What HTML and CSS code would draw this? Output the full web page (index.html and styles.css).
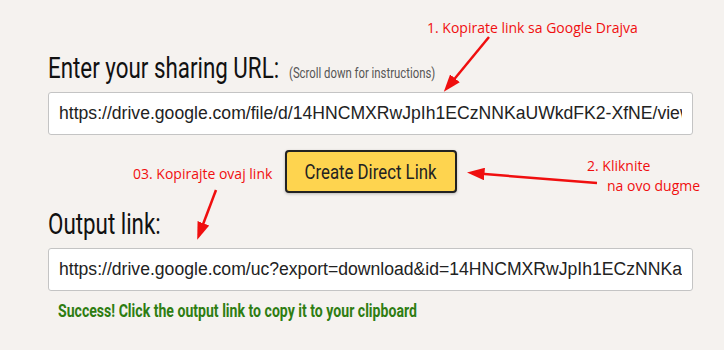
FILE: index.html
```html
<!DOCTYPE html>
<html lang="en">
<head>
    <meta charset="UTF-8">
    <meta name="viewport" content="width=device-width, initial-scale=1.0">
    <title>Google Drive Direct Link Generator</title>
    <link rel="stylesheet" href="styles.css">
</head>
<body>
    <div class="page">
        <div class="container">
            <h2 class="label"><span class="condensed">Enter your sharing URL:</span><small class="condensed">(Scroll down for instructions)</small></h2>
            <input type="text" class="url-field" value="https://drive.google.com/file/d/14HNCMXRwJpIh1ECzNNKaUWkdFK2-XfNE/view?usp=sharing">

            <div class="button-row">
                <button class="create-btn"><span class="condensed">Create Direct Link</span></button>
            </div>

            <h2 class="label output-label"><span class="condensed">Output link:</span></h2>
            <input type="text" class="url-field" value="https://drive.google.com/uc?export=download&amp;id=14HNCMXRwJpIh1ECzNNKaUWkdFK2-XfNE">

            <p class="success"><span class="condensed">Success! Click the output link to copy it to your clipboard</span></p>
        </div>

        <!-- crvene napomene preko stranice -->
        <div class="note note-1">1. Kopirate link sa Google Drajva</div>
        <div class="note note-2">2. Kliknite<br><span class="indent">na ovo dugme</span></div>
        <div class="note note-3">03. Kopirajte ovaj link</div>

        <svg class="arrows" width="724" height="350" viewBox="0 0 724 350">
            <defs>
                <marker id="head" markerWidth="7" markerHeight="5" refX="5" refY="2.5" orient="auto" markerUnits="strokeWidth">
                    <path d="M0,0 L7,2.5 L0,5 z" fill="#f00f0f"/>
                </marker>
            </defs>
            <line x1="489" y1="37" x2="447" y2="88" stroke="#f00f0f" stroke-width="2.5" marker-end="url(#head)"/>
            <line x1="597" y1="183" x2="472" y2="173" stroke="#f00f0f" stroke-width="2.5" marker-end="url(#head)"/>
            <line x1="216" y1="190" x2="199" y2="235" stroke="#f00f0f" stroke-width="2.5" marker-end="url(#head)"/>
        </svg>
    </div>
</body>
</html>
```

FILE: styles.css
```css
body {
    margin: 0;
    background-color: #f5f2ef;
    font-family: Roboto, "Liberation Sans", sans-serif;
}
.page {
    position: relative;
    width: 724px;
    height: 350px;
    overflow: hidden;
}
.container {
    padding: 50px 0 0 48px;
    width: 645px;
}
.condensed {
    display: inline-block;
    transform: scaleX(0.745);
    transform-origin: left center;
    white-space: nowrap;
}
.label {
    margin: 0;
    height: 42px;
    font-size: 30px;
    line-height: 36px;
    font-weight: 400;
    color: #111;
    white-space: nowrap;
}
.label small {
    position: relative;
    left: -69px;
    font-size: 14px;
    color: #555;
    transform: scaleX(0.81);
}
.output-label {
    margin-top: 13px;
}
.url-field {
    display: block;
    box-sizing: border-box;
    width: 645px;
    height: 43px;
    padding: 0 10px;
    border: 1px solid #c4c4c4;
    border-radius: 3px;
    background-color: #fff;
    font-family: "Liberation Sans", Arial, sans-serif;
    font-size: 17.6px;
    color: #222;
}
.button-row {
    text-align: center;
    margin-top: 15px;
}
.create-btn {
    width: 172px;
    height: 43px;
    background-color: #fed44f;
    border: 2px solid #222;
    border-radius: 4px;
    box-shadow: 0 1px 3px rgba(0, 0, 0, 0.25);
    font-family: Roboto, sans-serif;
    font-size: 21px;
    color: #222;
    padding: 0;
}
.create-btn .condensed {
    transform: scaleX(0.8);
    transform-origin: center;
}
.success {
    margin: 10px 0 0 10px;
    font-size: 17.5px;
    font-weight: bold;
    color: #2e7d12;
}
.success .condensed {
    transform: scaleX(0.805);
}
.note {
    position: absolute;
    font-family: "Open Sans", sans-serif;
    font-size: 14px;
    line-height: 20px;
    color: #f00f0f;
    white-space: nowrap;
}
.note-1 { left: 427px; top: 18px; }
.note-2 { left: 587px; top: 156px; }
.note-2 .indent { margin-left: 20px; }
.note-3 { left: 133px; top: 164px; }
.arrows {
    position: absolute;
    left: 0;
    top: 0;
    pointer-events: none;
}
```
